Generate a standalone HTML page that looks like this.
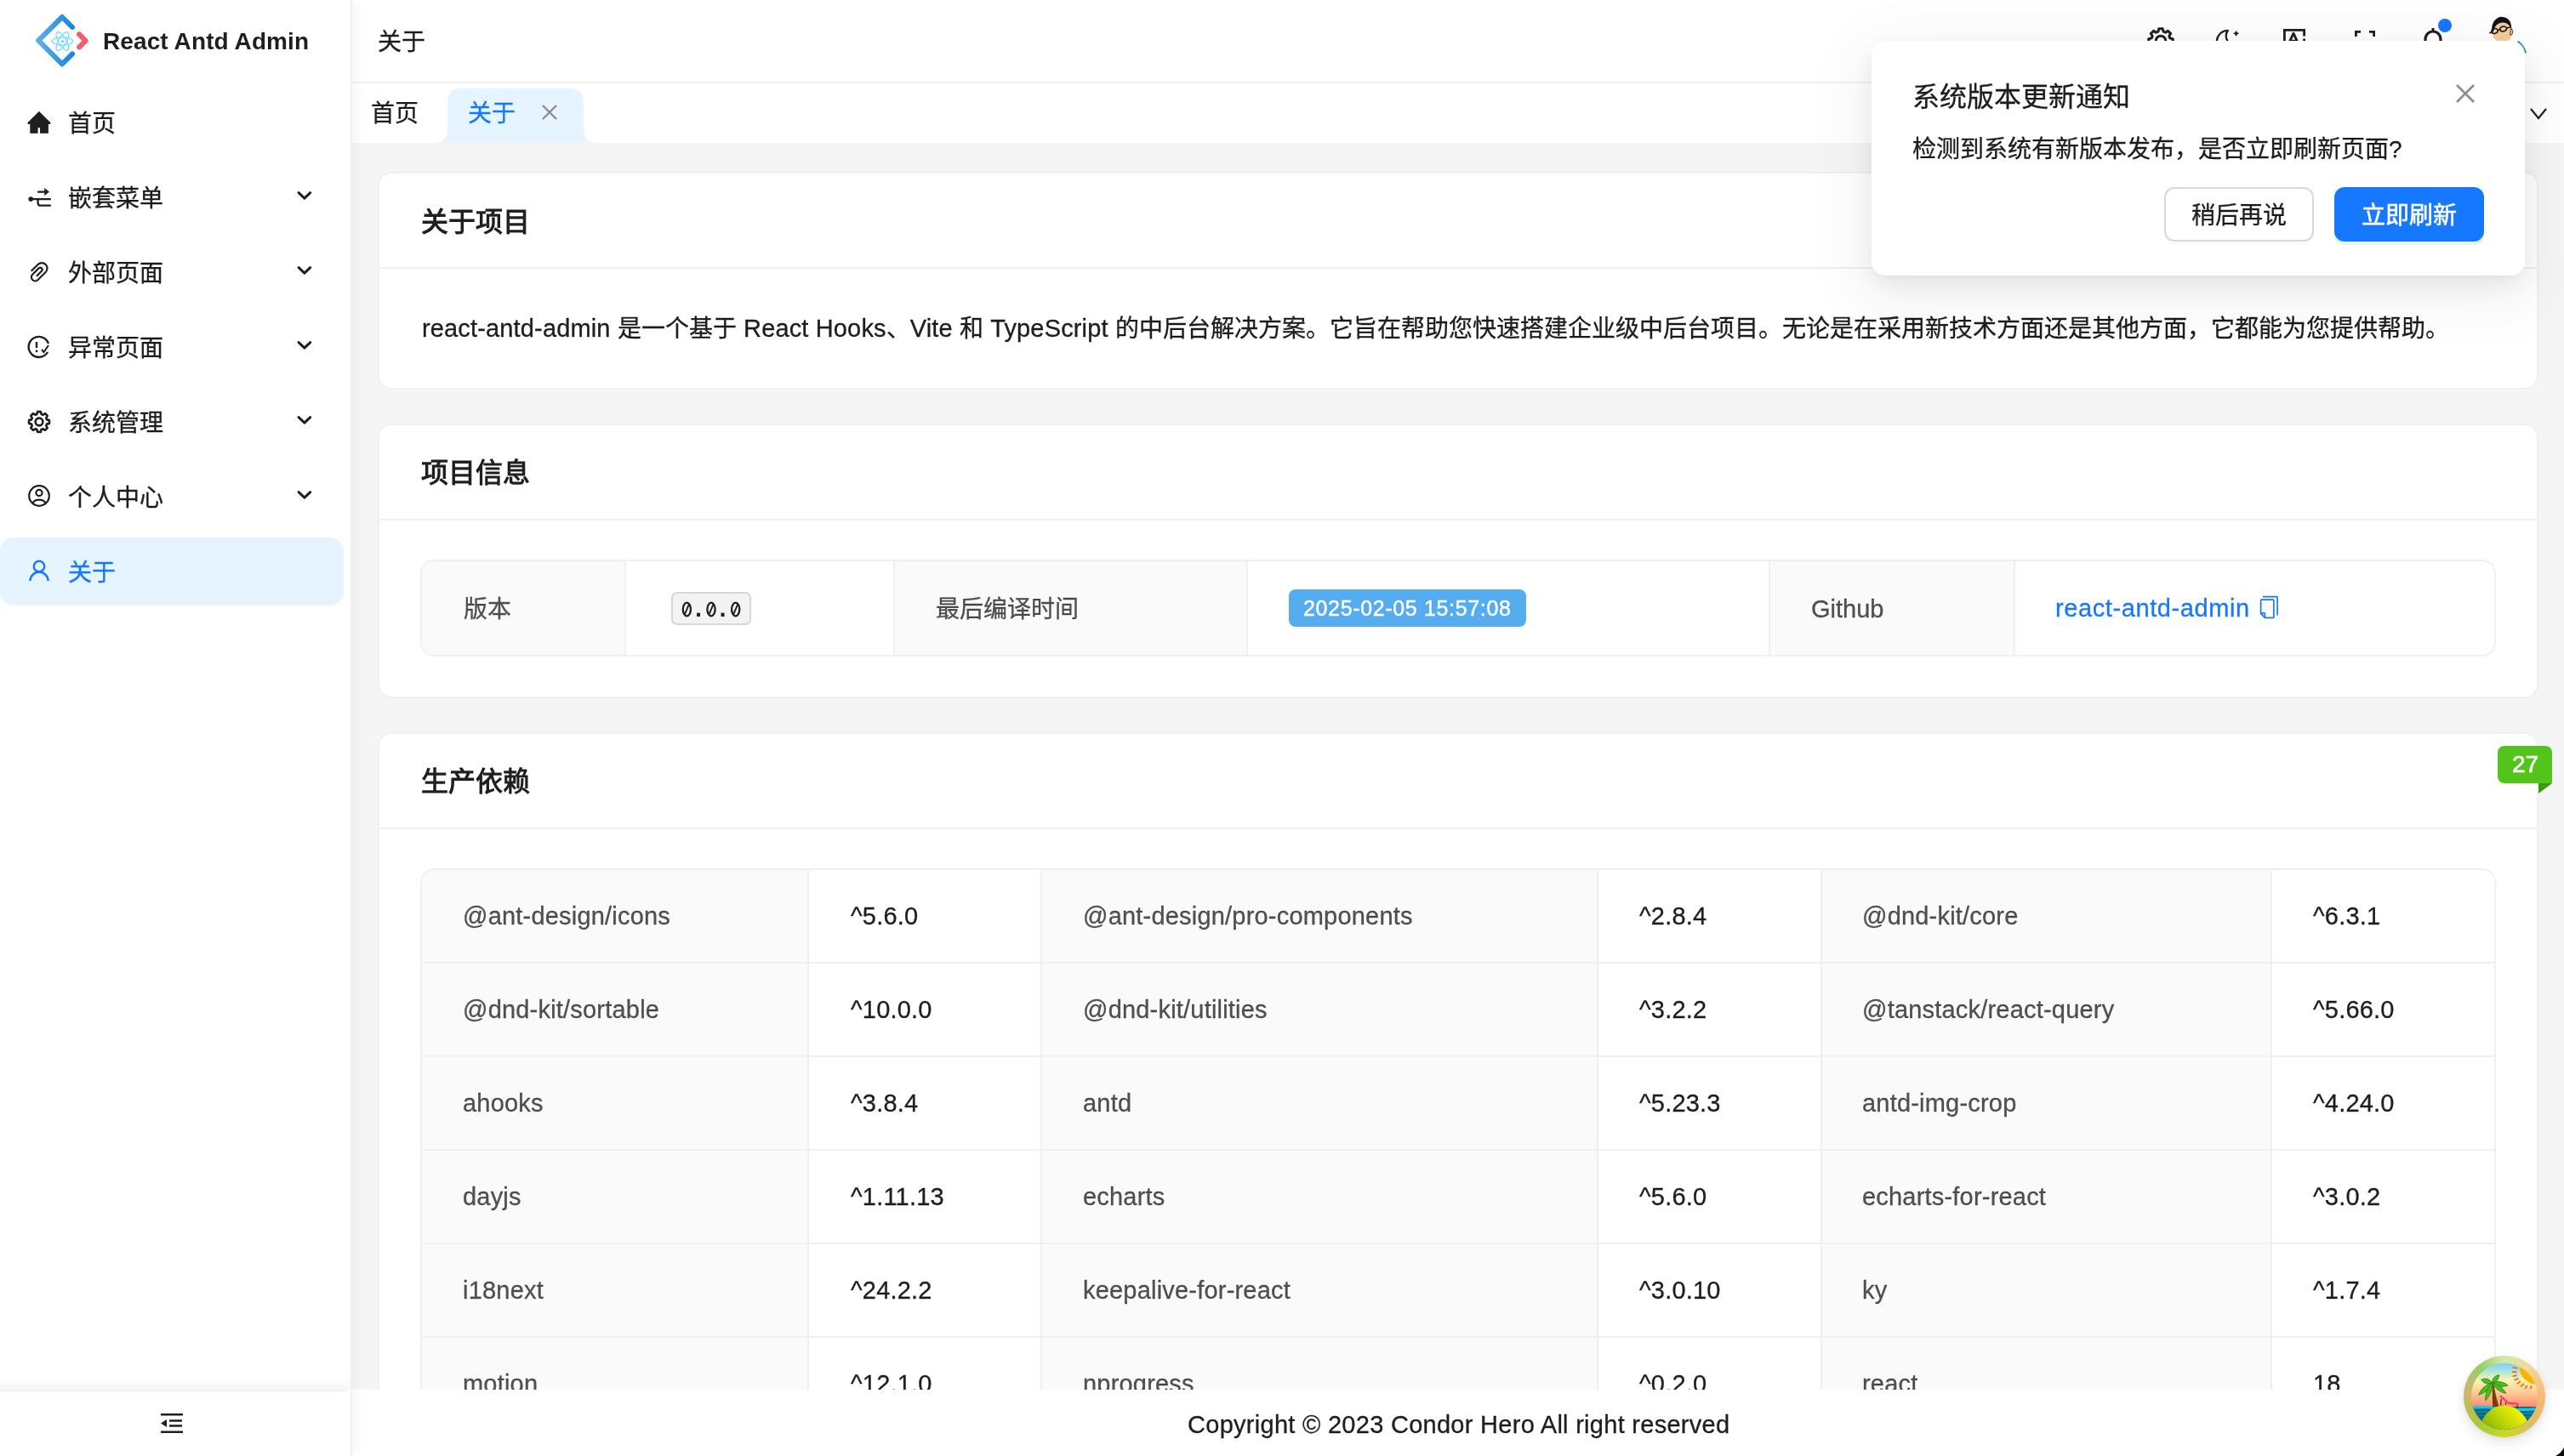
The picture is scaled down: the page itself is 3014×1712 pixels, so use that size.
<!DOCTYPE html><html lang='zh-CN'><head><meta charset='utf-8'><style>
*{box-sizing:border-box;margin:0;padding:0}
html,body{width:3014px;height:1712px;overflow:hidden;background:#f5f5f5;font-family:'Liberation Sans', sans-serif;color:rgba(0,0,0,0.88)}
.a{position:absolute}
.t{position:absolute;white-space:nowrap;line-height:40px;will-change:transform;-webkit-text-stroke-width:0.3px}
svg{display:block;overflow:visible}
</style></head><body>
<div class='a' style='left:444px;top:202px;width:2540px;height:256px;background:#fff;border:2px solid #f0f0f0;border-radius:16px'></div>
<div class='a' style='left:446px;top:314px;width:2536px;height:2px;background:#f0f0f0'></div>
<div class='t' style='left:495px;top:241px;font-size:32px;font-weight:bold;-webkit-text-stroke-width:0'>关于项目</div>
<div class='a' style='left:444px;top:498px;width:2540px;height:323px;background:#fff;border:2px solid #f0f0f0;border-radius:16px'></div>
<div class='a' style='left:446px;top:610px;width:2536px;height:2px;background:#f0f0f0'></div>
<div class='t' style='left:495px;top:536px;font-size:32px;font-weight:bold;-webkit-text-stroke-width:0'>项目信息</div>
<div class='a' style='left:444px;top:861px;width:2540px;height:900px;background:#fff;border:2px solid #f0f0f0;border-radius:16px'></div>
<div class='a' style='left:446px;top:973px;width:2536px;height:2px;background:#f0f0f0'></div>
<div class='t' style='left:495px;top:899px;font-size:32px;font-weight:bold;-webkit-text-stroke-width:0'>生产依赖</div>
<div class='t' style='left:496px;top:364px;line-height:44px;font-size:28px'><span style='font-size:29px;letter-spacing:0.15px'>react-antd-admin </span>是一个基于<span style='font-size:29px;letter-spacing:0.15px'> React Hooks</span>、<span style='font-size:29px;letter-spacing:0.15px'>Vite </span>和<span style='font-size:29px;letter-spacing:0.15px'> TypeScript </span>的中后台解决方案。它旨在帮助您快速搭建企业级中后台项目。无论是在采用新技术方面还是其他方面，它都能为您提供帮助。</div>
<div class='a' style='left:494px;top:658px;width:2440px;height:114px;border:2px solid #f0f0f0;border-radius:16px;overflow:hidden;background:#fff'>
<div class='a' style='left:-2px;top:0;width:240px;height:114px;background:#fafafa'></div>
<div class='a' style='left:554px;top:0;width:415px;height:114px;background:#fafafa'></div>
<div class='a' style='left:1583px;top:0;width:288px;height:114px;background:#fafafa'></div>
<div class='a' style='left:238px;top:0;width:2px;height:114px;background:#f0f0f0'></div>
<div class='a' style='left:554px;top:0;width:2px;height:114px;background:#f0f0f0'></div>
<div class='a' style='left:969px;top:0;width:2px;height:114px;background:#f0f0f0'></div>
<div class='a' style='left:1583px;top:0;width:2px;height:114px;background:#f0f0f0'></div>
<div class='a' style='left:1871px;top:0;width:2px;height:114px;background:#f0f0f0'></div>
</div>
<div class='t' style='left:545px;top:697px;font-size:28px;color:rgba(0,0,0,0.68)'>版本</div>
<div class='a' style='left:789px;top:696px;width:94px;height:39px;background:#f3f3f3;border:2px solid #d6d8d8;border-radius:7px'></div>
<svg class='a' style='left:789px;top:697px' width='94' height='38' viewBox='0 0 94 38'><ellipse cx='18.4' cy='19.5' rx='4.6' ry='7.8' fill='none' stroke='#1f1f1f' stroke-width='2.3'/><path d='M15.8 25.6 L21.0 13.4' stroke='#1f1f1f' stroke-width='1.9'/><ellipse cx='47.0' cy='19.5' rx='4.6' ry='7.8' fill='none' stroke='#1f1f1f' stroke-width='2.3'/><path d='M44.4 25.6 L49.6 13.4' stroke='#1f1f1f' stroke-width='1.9'/><ellipse cx='75.7' cy='19.5' rx='4.6' ry='7.8' fill='none' stroke='#1f1f1f' stroke-width='2.3'/><path d='M73.1 25.6 L78.3 13.4' stroke='#1f1f1f' stroke-width='1.9'/><rect x='30.1' y='23.6' width='3.9' height='4.4' fill='#1f1f1f'/><rect x='58.6' y='23.6' width='3.9' height='4.4' fill='#1f1f1f'/></svg>
<div class='t' style='left:1100px;top:697px;font-size:28px;color:rgba(0,0,0,0.68)'>最后编译时间</div>
<div class='a' style='left:1515px;top:693px;width:279px;height:44px;background:#55acee;border-radius:8px'></div>
<div class='t' style='left:1532px;top:695px;font-size:25px;color:#fff;letter-spacing:0.65px;-webkit-text-stroke-width:0.45px'>2025-02-05 15:57:08</div>
<div class='t' style='left:2129px;top:696px;font-size:29px;color:rgba(0,0,0,0.68)'>Github</div>
<div class='t' style='left:2416px;top:695px;font-size:29px;color:#1677ff;letter-spacing:0.6px'>react-antd-admin</div>
<svg class='a' style='left:2656px;top:700px' width='24' height='28' viewBox='0 0 24 28'><g fill='none' stroke='#1677ff' stroke-width='1.7' stroke-linejoin='round'><path d='M4.1 1.6 H20.2 Q21.1 1.6 21.1 2.5 V23.5'/><path d='M1.6 5.9 Q1.6 5.2 2.5 5.2 H15.9 Q16.8 5.2 16.8 6.1 V26 Q16.8 26.4 16 26.4 H6.6 L1.6 21.4 Z'/><path d='M1.6 20.9 H5.7 Q6.4 20.9 6.4 21.6 V26.4'/></g></svg>
<div class='a' style='left:494px;top:1021px;width:2440px;height:882px;border:2px solid #f0f0f0;border-radius:16px;overflow:hidden;background:#fff'>
<div class='a' style='left:-2px;top:0;width:455px;height:882px;background:#fafafa'></div>
<div class='a' style='left:727px;top:0;width:654px;height:882px;background:#fafafa'></div>
<div class='a' style='left:1644px;top:0;width:529px;height:882px;background:#fafafa'></div>
<div class='a' style='left:453px;top:0;width:2px;height:882px;background:#f0f0f0'></div>
<div class='a' style='left:727px;top:0;width:2px;height:882px;background:#f0f0f0'></div>
<div class='a' style='left:1381px;top:0;width:2px;height:882px;background:#f0f0f0'></div>
<div class='a' style='left:1644px;top:0;width:2px;height:882px;background:#f0f0f0'></div>
<div class='a' style='left:2173px;top:0;width:2px;height:882px;background:#f0f0f0'></div>
<div class='a' style='left:0;top:108px;width:2440px;height:2px;background:#f0f0f0'></div>
<div class='a' style='left:0;top:218px;width:2440px;height:2px;background:#f0f0f0'></div>
<div class='a' style='left:0;top:328px;width:2440px;height:2px;background:#f0f0f0'></div>
<div class='a' style='left:0;top:438px;width:2440px;height:2px;background:#f0f0f0'></div>
<div class='a' style='left:0;top:548px;width:2440px;height:2px;background:#f0f0f0'></div>
<div class='a' style='left:0;top:658px;width:2440px;height:2px;background:#f0f0f0'></div>
<div class='a' style='left:0;top:768px;width:2440px;height:2px;background:#f0f0f0'></div>
</div>
<div class='t' style='left:544px;top:1057px;font-size:29px;letter-spacing:0.2px;color:rgba(0,0,0,0.68)'>@ant-design/icons</div>
<div class='t' style='left:1000px;top:1057px;font-size:29px;letter-spacing:0.2px;'>^5.6.0</div>
<div class='t' style='left:1273px;top:1057px;font-size:29px;letter-spacing:0.2px;color:rgba(0,0,0,0.68)'>@ant-design/pro-components</div>
<div class='t' style='left:1927px;top:1057px;font-size:29px;letter-spacing:0.2px;'>^2.8.4</div>
<div class='t' style='left:2189px;top:1057px;font-size:29px;letter-spacing:0.2px;color:rgba(0,0,0,0.68)'>@dnd-kit/core</div>
<div class='t' style='left:2719px;top:1057px;font-size:29px;letter-spacing:0.2px;'>^6.3.1</div>
<div class='t' style='left:544px;top:1167px;font-size:29px;letter-spacing:0.2px;color:rgba(0,0,0,0.68)'>@dnd-kit/sortable</div>
<div class='t' style='left:1000px;top:1167px;font-size:29px;letter-spacing:0.2px;'>^10.0.0</div>
<div class='t' style='left:1273px;top:1167px;font-size:29px;letter-spacing:0.2px;color:rgba(0,0,0,0.68)'>@dnd-kit/utilities</div>
<div class='t' style='left:1927px;top:1167px;font-size:29px;letter-spacing:0.2px;'>^3.2.2</div>
<div class='t' style='left:2189px;top:1167px;font-size:29px;letter-spacing:0.2px;color:rgba(0,0,0,0.68)'>@tanstack/react-query</div>
<div class='t' style='left:2719px;top:1167px;font-size:29px;letter-spacing:0.2px;'>^5.66.0</div>
<div class='t' style='left:544px;top:1277px;font-size:29px;letter-spacing:0.2px;color:rgba(0,0,0,0.68)'>ahooks</div>
<div class='t' style='left:1000px;top:1277px;font-size:29px;letter-spacing:0.2px;'>^3.8.4</div>
<div class='t' style='left:1273px;top:1277px;font-size:29px;letter-spacing:0.2px;color:rgba(0,0,0,0.68)'>antd</div>
<div class='t' style='left:1927px;top:1277px;font-size:29px;letter-spacing:0.2px;'>^5.23.3</div>
<div class='t' style='left:2189px;top:1277px;font-size:29px;letter-spacing:0.2px;color:rgba(0,0,0,0.68)'>antd-img-crop</div>
<div class='t' style='left:2719px;top:1277px;font-size:29px;letter-spacing:0.2px;'>^4.24.0</div>
<div class='t' style='left:544px;top:1387px;font-size:29px;letter-spacing:0.2px;color:rgba(0,0,0,0.68)'>dayjs</div>
<div class='t' style='left:1000px;top:1387px;font-size:29px;letter-spacing:0.2px;'>^1.11.13</div>
<div class='t' style='left:1273px;top:1387px;font-size:29px;letter-spacing:0.2px;color:rgba(0,0,0,0.68)'>echarts</div>
<div class='t' style='left:1927px;top:1387px;font-size:29px;letter-spacing:0.2px;'>^5.6.0</div>
<div class='t' style='left:2189px;top:1387px;font-size:29px;letter-spacing:0.2px;color:rgba(0,0,0,0.68)'>echarts-for-react</div>
<div class='t' style='left:2719px;top:1387px;font-size:29px;letter-spacing:0.2px;'>^3.0.2</div>
<div class='t' style='left:544px;top:1497px;font-size:29px;letter-spacing:0.2px;color:rgba(0,0,0,0.68)'>i18next</div>
<div class='t' style='left:1000px;top:1497px;font-size:29px;letter-spacing:0.2px;'>^24.2.2</div>
<div class='t' style='left:1273px;top:1497px;font-size:29px;letter-spacing:0.2px;color:rgba(0,0,0,0.68)'>keepalive-for-react</div>
<div class='t' style='left:1927px;top:1497px;font-size:29px;letter-spacing:0.2px;'>^3.0.10</div>
<div class='t' style='left:2189px;top:1497px;font-size:29px;letter-spacing:0.2px;color:rgba(0,0,0,0.68)'>ky</div>
<div class='t' style='left:2719px;top:1497px;font-size:29px;letter-spacing:0.2px;'>^1.7.4</div>
<div class='t' style='left:544px;top:1607px;font-size:29px;letter-spacing:0.2px;color:rgba(0,0,0,0.68)'>motion</div>
<div class='t' style='left:1000px;top:1607px;font-size:29px;letter-spacing:0.2px;'>^12.1.0</div>
<div class='t' style='left:1273px;top:1607px;font-size:29px;letter-spacing:0.2px;color:rgba(0,0,0,0.68)'>nprogress</div>
<div class='t' style='left:1927px;top:1607px;font-size:29px;letter-spacing:0.2px;'>^0.2.0</div>
<div class='t' style='left:2189px;top:1607px;font-size:29px;letter-spacing:0.2px;color:rgba(0,0,0,0.68)'>react</div>
<div class='t' style='left:2719px;top:1607px;font-size:29px;letter-spacing:0.2px;'>18</div>
<div class='a' style='left:2936px;top:877px;width:64px;height:44px;background:#52c41a;border-radius:8px 8px 0 8px'></div>
<div class='a' style='left:2984px;top:921px;width:0;height:0;border-top:12px solid #3e9712;border-right:16px solid transparent'></div>
<div class='t' style='left:2953px;top:879px;font-size:28px;color:#fff;-webkit-text-stroke-width:0.6px'>27</div>
<div class='a' style='left:414px;top:1634px;width:2600px;height:78px;background:#fff'></div>
<div class='t' style='left:1396px;top:1655px;font-size:29px;letter-spacing:0.28px'>Copyright © 2023 Condor Hero All right reserved</div>
<div class='a' style='left:414px;top:0;width:2600px;height:96px;background:#fff'></div>
<div class='a' style='left:414px;top:96px;width:2600px;height:2px;background:#f0f0f0'></div>
<div class='t' style='left:444px;top:30px;font-size:28px'>关于</div>
<div class='a' style='left:414px;top:98px;width:2600px;height:70px;background:#fff'></div>
<div class='t' style='left:436px;top:114px;font-size:28px'>首页</div>
<svg class='a' style='left:510px;top:104px' width='192' height='64' viewBox='0 0 192 64'><path d='M0 64 Q16 64 16 48 V16 Q16 0 32 0 H160 Q176 0 176 16 V48 Q176 64 192 64 Z' fill='#e6f4ff'/></svg>
<div class='t' style='left:550px;top:114px;font-size:28px;color:#1677ff'>关于</div>
<svg class='a' style='left:637px;top:123px' width='18' height='18' viewBox='0 0 18 18'><path d='M1 1 L17 17 M17 1 L1 17' stroke='#8c8c8c' stroke-width='2.4'/></svg>
<svg class='a' style='left:2974px;top:127px' width='20' height='14' viewBox='0 0 20 14'><path d='M1 1 L10 12 L19 1' fill='none' stroke='#1f1f1f' stroke-width='2.1'/></svg>
<svg class='a' style='left:2524px;top:32px' width='32' height='32' viewBox='0 0 32 32'><path fill='none' stroke='#1f1f1f' stroke-width='3' stroke-linejoin='round' d='M19.09 5.23 L18.25 1.78 L13.75 1.78 L12.91 5.23 L10.57 6.20 L7.54 4.35 L4.35 7.54 L6.20 10.57 L5.23 12.91 L1.78 13.75 L1.78 18.25 L5.23 19.09 L6.20 21.43 L4.35 24.46 L7.54 27.65 L10.57 25.80 L12.91 26.77 L13.75 30.22 L18.25 30.22 L19.09 26.77 L21.43 25.80 L24.46 27.65 L27.65 24.46 L25.80 21.43 L26.77 19.09 L30.22 18.25 L30.22 13.75 L26.77 12.91 L25.80 10.57 L27.65 7.54 L24.46 4.35 L21.43 6.20 Z'/><circle cx='16' cy='16' r='5.8' fill='none' stroke='#1f1f1f' stroke-width='3'/></svg>
<svg class='a' style='left:2604px;top:34px' width='30' height='30' viewBox='0 0 24 24'><path fill='none' stroke='#1f1f1f' stroke-width='1.8' stroke-linejoin='round' d='M11.9 1.6 A10.2 10.2 0 1 0 21.6 14.2 A8.2 8.2 0 0 1 11.9 1.6z'/><path d='M19.7 1.3 Q20.2 3.7 22.6 4.24 Q20.2 4.8 19.7 7.2 Q19.2 4.8 16.8 4.24 Q19.2 3.7 19.7 1.3Z' fill='#1f1f1f'/></svg>
<svg class='a' style='left:2684px;top:34px' width='26' height='28' viewBox='0 0 26 28'><path d='M1.4 28 V1.4 H24.6 V8.5 M24.6 11.5 V14.5' fill='none' stroke='#1f1f1f' stroke-width='2.8'/><path d='M7.8 14.2 L12 5.2 L16.2 14.2 Z' fill='none' stroke='#1f1f1f' stroke-width='2.8' stroke-linejoin='round'/></svg>
<svg class='a' style='left:2768px;top:36px' width='24' height='24' viewBox='0 0 24 24'><path d='M1.4 7 V1.4 H7 M17 1.4 H22.6 V7 M22.6 17 V22.6 H17 M7 22.6 H1.4 V17' fill='none' stroke='#1f1f1f' stroke-width='2.8'/></svg>
<svg class='a' style='left:2849px;top:32px' width='22' height='30' viewBox='0 0 22 30'><path d='M11 1 V4' stroke='#1f1f1f' stroke-width='3'/><path d='M2 26 V14 A9 9 0 0 1 20 14 V26 Z' fill='none' stroke='#1f1f1f' stroke-width='3.2'/></svg>
<div class='a' style='left:2866px;top:22px;width:16px;height:16px;border-radius:50%;background:#1677ff'></div>
<svg class='a' style='left:2908px;top:16px' width='64' height='64' viewBox='0 0 64 64'>
<path d='M51.5 33 Q58 38 60.6 46.5' fill='none' stroke='#2a93ad' stroke-width='3.2'/>
<path d='M22 19 Q22 10 32 9.5 Q43 9.5 44.5 19 Q46 28 40 32 L27 32 Q21 28 22 19Z' fill='#f4cd9a'/>
<path d='M43.5 18 Q46.5 18 45.5 23 Q44.5 26 42.5 25Z' fill='#f4cd9a' stroke='#222' stroke-width='0.8'/>
<path d='M21.5 22 Q19.5 8 31 3.8 Q42 3 44 14 L44.5 20 Q42 10 33 10.5 Q25 11.5 23 21 Z' fill='#121212'/>
<g fill='none' stroke='#151515' stroke-width='1.6'><ellipse cx='24.5' cy='20.5' rx='3.6' ry='2.8' transform='rotate(-15 24.5 20.5)'/><ellipse cx='34.6' cy='18' rx='3.8' ry='2.8' transform='rotate(-15 34.6 18)'/><path d='M28 19.5 L31 18.8 M38.5 17 L44 15.8 M21 21.5 L18.5 23'/></g>
<path d='M30.5 28 H33' stroke='#9a9' stroke-width='0.8'/>
</svg>
<div class='a' style='left:0;top:0;width:414px;height:1712px;background:#fff;border-right:2px solid #f0f0f0;box-shadow:2px 0 16px rgba(0,0,0,0.05)'></div>
<svg class='a' style='left:30px;top:10px' width='85' height='80' viewBox='30 10 85 80'>
<defs><linearGradient id='lg' x1='0' y1='0' x2='1' y2='0'><stop offset='0' stop-color='#62ace4'/><stop offset='1' stop-color='#1a86de'/></linearGradient></defs>
<path d='M85 32 L73 20 L45.2 47.7 L73 75.4 L85 63.4' fill='none' stroke='url(#lg)' stroke-width='6' stroke-linecap='round' stroke-linejoin='round'/>
<path d='M93.2 40.3 L100.5 47.8 L93.2 55.3' fill='none' stroke='#f0616d' stroke-width='6.2' stroke-linecap='round' stroke-linejoin='round'/>
<g fill='none' stroke='#61dafb' stroke-width='1.1'><ellipse cx='73.4' cy='48.5' rx='12.3' ry='4.6'/><ellipse cx='73.4' cy='48.5' rx='12.3' ry='4.6' transform='rotate(60 73.4 48.5)'/><ellipse cx='73.4' cy='48.5' rx='12.3' ry='4.6' transform='rotate(120 73.4 48.5)'/></g>
<circle cx='73.4' cy='48.5' r='1.6' fill='#61dafb'/>
</svg>
<div class='t' style='left:121px;top:29px;font-size:28px;font-weight:bold;letter-spacing:0.1px;-webkit-text-stroke-width:0;color:rgba(0,0,0,0.88)'>React Antd Admin</div>
<div class='a' style='left:0;top:632px;width:404px;height:80px;background:#e6f4ff;border-radius:16px'></div>
<div class='t' style='left:80px;top:126px;font-size:28px;color:rgba(0,0,0,0.88)'>首页</div>
<div class='t' style='left:80px;top:214px;font-size:28px;color:rgba(0,0,0,0.88)'>嵌套菜单</div>
<svg class='a' style='left:349px;top:224px' width='18' height='12' viewBox='0 0 18 12'><path d='M2.1 2.6 L8.9 9.2 L15.7 2.6' fill='none' stroke='#1f1f1f' stroke-width='3' stroke-linecap='round' stroke-linejoin='round'/></svg>
<div class='t' style='left:80px;top:302px;font-size:28px;color:rgba(0,0,0,0.88)'>外部页面</div>
<svg class='a' style='left:349px;top:312px' width='18' height='12' viewBox='0 0 18 12'><path d='M2.1 2.6 L8.9 9.2 L15.7 2.6' fill='none' stroke='#1f1f1f' stroke-width='3' stroke-linecap='round' stroke-linejoin='round'/></svg>
<div class='t' style='left:80px;top:390px;font-size:28px;color:rgba(0,0,0,0.88)'>异常页面</div>
<svg class='a' style='left:349px;top:400px' width='18' height='12' viewBox='0 0 18 12'><path d='M2.1 2.6 L8.9 9.2 L15.7 2.6' fill='none' stroke='#1f1f1f' stroke-width='3' stroke-linecap='round' stroke-linejoin='round'/></svg>
<div class='t' style='left:80px;top:478px;font-size:28px;color:rgba(0,0,0,0.88)'>系统管理</div>
<svg class='a' style='left:349px;top:488px' width='18' height='12' viewBox='0 0 18 12'><path d='M2.1 2.6 L8.9 9.2 L15.7 2.6' fill='none' stroke='#1f1f1f' stroke-width='3' stroke-linecap='round' stroke-linejoin='round'/></svg>
<div class='t' style='left:80px;top:566px;font-size:28px;color:rgba(0,0,0,0.88)'>个人中心</div>
<svg class='a' style='left:349px;top:576px' width='18' height='12' viewBox='0 0 18 12'><path d='M2.1 2.6 L8.9 9.2 L15.7 2.6' fill='none' stroke='#1f1f1f' stroke-width='3' stroke-linecap='round' stroke-linejoin='round'/></svg>
<div class='t' style='left:80px;top:654px;font-size:28px;color:#1677ff'>关于</div>
<svg class='a' style='left:32px;top:130px' width='28' height='28' viewBox='0 0 28 28'><path d='M13.9 1.6 L26.6 14.2 Q27.5 15.3 26.2 15.5 L24.3 15.5 V26.3 H15.6 V19.6 H12 V26.3 H3.9 V15.5 L1.8 15.5 Q0.4 15.3 1.3 14.2 Z' fill='#1f1f1f' stroke='#1f1f1f' stroke-width='1.1' stroke-linejoin='round'/></svg>
<svg class='a' style='left:33px;top:218px' width='28' height='28' viewBox='0 0 28 28'><circle cx='3.2' cy='16.1' r='2.8' fill='#1f1f1f'/><path d='M3.2 16.1 H26.8 M11.6 16.1 V20.7 Q11.6 23.7 14.6 23.7 H26.8 M11.2 7.6 H21' fill='none' stroke='#1f1f1f' stroke-width='2.3'/><path d='M19.2 3 L25 7.6 L19.2 12.2 Z' fill='#1f1f1f'/></svg>
<svg class='a' style='left:30px;top:304px' width='32' height='32' viewBox='-16 -16 32 32'><path transform='rotate(45)' d='M1.13 5.53 V-2.97 A2.35 2.35 0 0 0 -3.57 -2.97 V7.43 A4.5 4.5 0 0 0 5.43 7.43 V-5.37 A6.4 6.4 0 0 0 -7.4 -5.37 V5.73' fill='none' stroke='#1f1f1f' stroke-width='2.2' stroke-linecap='butt'/></svg>
<svg class='a' style='left:32px;top:394px' width='28' height='28' viewBox='0 0 28 28'><path d='M25 10 A12 12 0 1 0 24 20' fill='none' stroke='#1f1f1f' stroke-width='2.4'/><path d='M11 8 V15' stroke='#1f1f1f' stroke-width='2.4'/><circle cx='11' cy='19' r='1.4' fill='#1f1f1f'/><path d='M17 17 L19.5 20 L25 12' fill='none' stroke='#1f1f1f' stroke-width='2'/></svg>
<svg class='a' style='left:32px;top:482px' width='28' height='28' viewBox='0 0 32 32'><path fill='none' stroke='#1f1f1f' stroke-width='3' stroke-linejoin='round' d='M18.98 5.62 L18.16 2.37 L13.84 2.37 L13.02 5.62 L10.76 6.55 L7.89 4.84 L4.84 7.89 L6.55 10.76 L5.62 13.02 L2.37 13.84 L2.37 18.16 L5.62 18.98 L6.55 21.24 L4.84 24.11 L7.89 27.16 L10.76 25.45 L13.02 26.38 L13.84 29.63 L18.16 29.63 L18.98 26.38 L21.24 25.45 L24.11 27.16 L27.16 24.11 L25.45 21.24 L26.38 18.98 L29.63 18.16 L29.63 13.84 L26.38 13.02 L25.45 10.76 L27.16 7.89 L24.11 4.84 L21.24 6.55 Z'/><circle cx='16' cy='16' r='5' fill='none' stroke='#1f1f1f' stroke-width='3'/></svg>
<svg class='a' style='left:33px;top:570px' width='26' height='26' viewBox='0 0 26 26'><circle cx='13' cy='13' r='11.8' fill='none' stroke='#1f1f1f' stroke-width='2.2'/><circle cx='13' cy='9.5' r='3.6' fill='none' stroke='#1f1f1f' stroke-width='2.2'/><path d='M5.5 21.5 A8 6 0 0 1 20.5 21.5' fill='none' stroke='#1f1f1f' stroke-width='2.2'/></svg>
<svg class='a' style='left:34px;top:658px' width='24' height='26' viewBox='0 0 24 26'><circle cx='12' cy='8' r='6.2' fill='none' stroke='#1677ff' stroke-width='2.4'/><path d='M1.5 25 A10.5 10.5 0 0 1 22.5 25' fill='none' stroke='#1677ff' stroke-width='2.4'/></svg>
<div class='a' style='left:0;top:1634px;width:412px;height:78px;background:#fff'></div>
<div class='a' style='left:0;top:1619px;width:411px;height:17px;border-radius:0 0 6px 0;background:linear-gradient(to bottom,rgba(0,0,0,0),rgba(0,0,0,0.035) 80%,rgba(0,0,0,0.06))'></div>
<svg class='a' style='left:189px;top:1662px' width='26' height='23' viewBox='0 0 26 23'><path d='M0 1.2 H26 M10 8.5 H25 M10 14.5 H25 M0 21.8 H26' stroke='#1f1f1f' stroke-width='2.4'/><path d='M0 11.5 L7 7 V16 Z' fill='#1f1f1f'/></svg>
<div class='a' style='left:2200px;top:48px;width:768px;height:276px;background:#fff;border-radius:16px;box-shadow:0 12px 32px 0 rgba(0,0,0,0.07),0 6px 12px -8px rgba(0,0,0,0.12),0 18px 64px 24px rgba(0,0,0,0.045)'></div>
<div class='t' style='left:2248px;top:94px;font-size:32px'>系统版本更新通知</div>
<svg class='a' style='left:2887px;top:99px' width='22' height='22' viewBox='0 0 22 22'><path d='M1 1 L21 21 M21 1 L1 21' stroke='#8c8c8c' stroke-width='2.6'/></svg>
<div class='t' style='left:2248px;top:156px;font-size:28px'>检测到系统有新版本发布，是否立即刷新页面?</div>
<div class='a' style='left:2544px;top:220px;width:176px;height:64px;border:2px solid #d9d9d9;border-radius:12px;background:#fff;box-shadow:0 4px 0 rgba(0,0,0,0.02)'></div>
<div class='t' style='left:2576px;top:234px;font-size:28px'>稍后再说</div>
<div class='a' style='left:2744px;top:220px;width:176px;height:64px;border-radius:12px;background:#1677ff;box-shadow:0 4px 0 rgba(5,145,255,0.1)'></div>
<div class='t' style='left:2776px;top:234px;font-size:28px;color:#fff;-webkit-text-stroke-width:0.6px'>立即刷新</div>
<div class='a' style='left:2896px;top:1594px;width:96px;height:96px;border-radius:50%;background:conic-gradient(from 0deg,#d6e8a8,#f3d898 40deg,#f6b878 90deg,#d8c060 140deg,#c8d828 180deg,#a8c838 225deg,#d2b470 275deg,#92d06c 320deg,#d6e8a8 360deg);box-shadow:0 6px 16px rgba(0,0,0,0.10),0 2px 6px rgba(0,0,0,0.06)'></div>
<svg class='a' style='left:2896px;top:1594px' width='96' height='96' viewBox='0 0 96 96'>
<defs>
<linearGradient id='sky' x1='0' y1='0' x2='0' y2='1'><stop offset='0.1' stop-color='#78d6f8'/><stop offset='0.3' stop-color='#f6f4b4'/><stop offset='0.42' stop-color='#fdd49a'/><stop offset='0.56' stop-color='#fda47e'/><stop offset='0.66' stop-color='#fd7e70'/></linearGradient>
<linearGradient id='isl' x1='0.15' y1='0.9' x2='0.85' y2='0.1'><stop offset='0' stop-color='#3f8e0c'/><stop offset='0.55' stop-color='#a8cc08'/><stop offset='1' stop-color='#fbf500'/></linearGradient>
<clipPath id='cc'><circle cx='48' cy='48' r='39.2'/></clipPath>
</defs>
<g clip-path='url(#cc)'>
<rect x='0' y='0' width='96' height='96' fill='url(#sky)'/>
<circle cx='85.6' cy='13.4' r='20' fill='#ffb300'/>
<g stroke='#f56a16' stroke-width='1.8' stroke-linecap='round'><path d='M58.4 14 L62.7 14.6'/><path d='M57.8 19 L62 19.4'/><path d='M58.4 24.2 L62 23.4'/><path d='M60.2 28.6 L64 27.2'/><path d='M63.3 32.8 L66.4 30.6'/><path d='M67.7 35.8 L70.6 33.4'/><path d='M72.6 38.4 L74.2 35.6'/><path d='M78.8 38.6 L79.6 35.8'/></g>
<rect x='0' y='60' width='96' height='40' fill='#0a6884'/>
<path d='M0 62.5 Q20 59 40 62 T96 62' fill='none' stroke='#16c8e8' stroke-width='3.4'/>
<path d='M0 67.5 Q20 65 40 67 T96 67' fill='none' stroke='#0d8aa6' stroke-width='1.6'/>
<path d='M0 71.5 Q20 69 40 71 T96 71' fill='none' stroke='#0d8aa6' stroke-width='1.4'/>
<ellipse cx='48' cy='92.5' rx='30' ry='34' fill='url(#isl)'/>
<path d='M34.2 60.6 Q33.6 47 33.6 34 L35.4 34 Q37.5 47 41.2 59.5 Z' fill='#7a3d0a'/>
<g fill='#4cbc22' stroke='#2f8a0c' stroke-width='0.9' stroke-linejoin='round'><path d='M33.5 32.0 Q28.7 24.8 20.7 28.2 Q25.5 35.4 33.5 32.0Z'/><path d='M33.5 32.0 Q41.4 30.7 41.7 22.7 Q33.8 24.0 33.5 32.0Z'/><path d='M33.5 32.0 Q42.0 38.9 52.2 35.0 Q43.7 28.1 33.5 32.0Z'/><path d='M33.5 32.0 Q38.6 42.1 49.7 44.3 Q44.6 34.2 33.5 32.0Z'/><path d='M33.5 32.0 Q21.9 35.0 17.6 46.2 Q29.2 43.2 33.5 32.0Z'/><path d='M33.5 32.0 Q24.9 40.7 25.6 53.0 Q34.2 44.3 33.5 32.0Z'/></g>
<path d='M42.9 47.4 L51 54.4 Q53 56 56 56 L64.6 56.7' fill='none' stroke='#ff3c6e' stroke-width='2.4'/>
<path d='M44.2 51 L43.6 58.6 M49.7 55.2 L49.5 57.6 M63.3 58 L62.8 62.2' stroke='#222' stroke-width='1.1'/>
</g>
</svg>
<svg class='a' style='left:2990px;top:1688px' width='24' height='24' viewBox='0 0 24 24'><path d='M24 14 A 22 22 0 0 1 14 24 H24 Z' fill='#0b0b0b'/></svg>
</body></html>
